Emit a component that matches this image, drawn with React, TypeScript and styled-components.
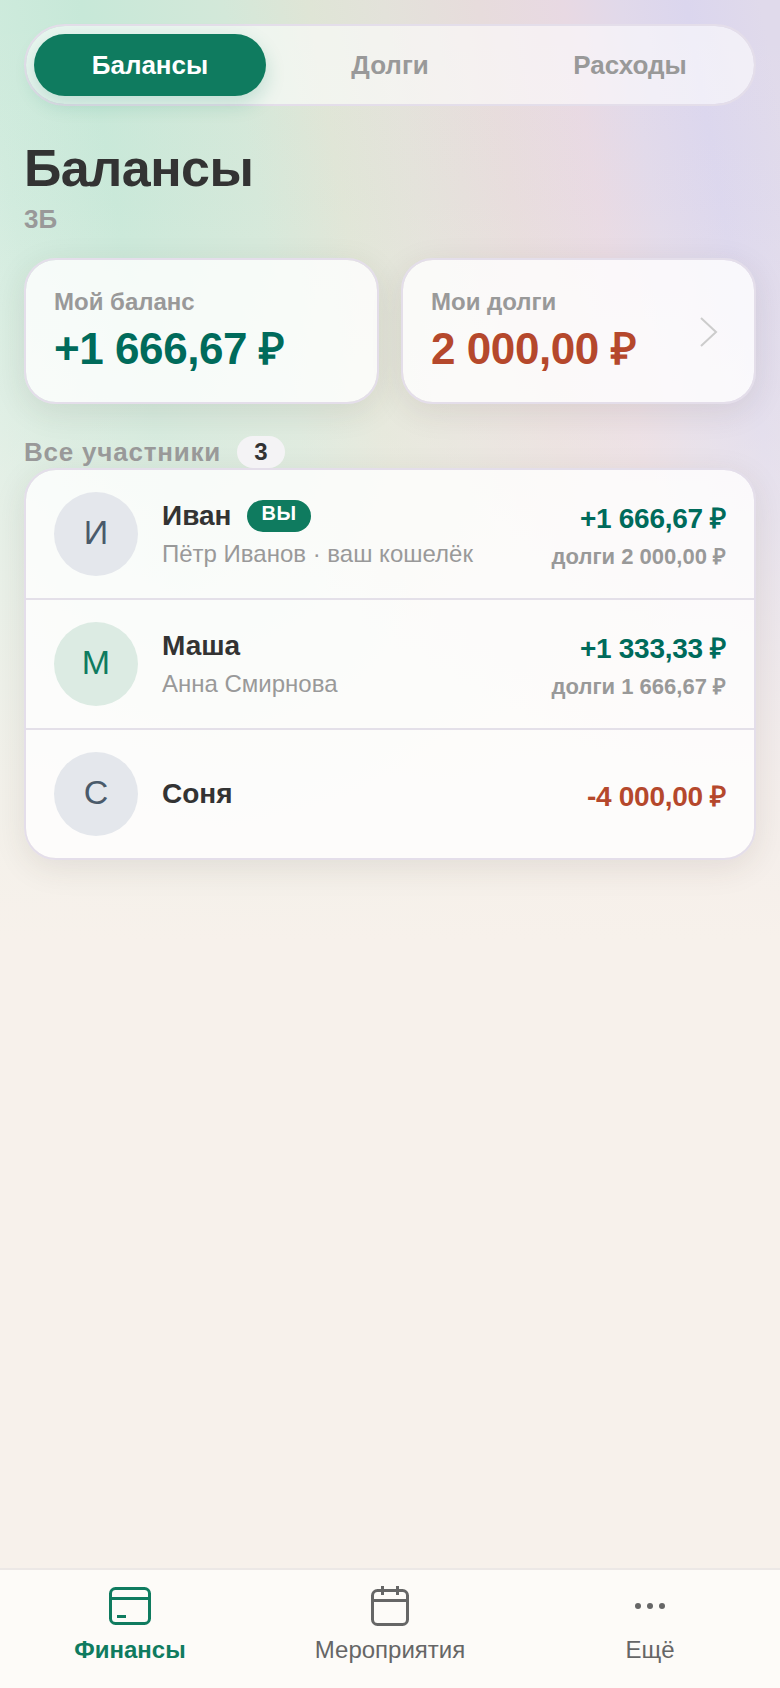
import React, { useState } from 'react';
import styled, { createGlobalStyle } from 'styled-components';

const GlobalStyle = createGlobalStyle`
  *, *::before, *::after { box-sizing: border-box; }
  body {
    margin: 0;
    background: #f7f1eb;
    color: #333333;
    font-family: "Liberation Sans", Arial, sans-serif;
  }
  button { font: inherit; color: inherit; border: 0; background: none; padding: 0; cursor: pointer; }
  h1, h2, p, ul { margin: 0; padding: 0; }
  ul { list-style: none; }
`;

const Page = styled.div`
  min-height: 100vh;
  display: flex;
  flex-direction: column;
  background:
    linear-gradient(to bottom, rgba(247, 241, 235, 0) 0, rgba(247, 241, 235, 0.06) 200px, rgba(247, 241, 235, 0.35) 440px, rgba(247, 241, 235, 0.85) 780px, #f7f1eb 940px) no-repeat,
    linear-gradient(80deg, #d8efe4 8%, #cfebdd 15%, #c7e8d8 26%, #d3e8d9 41%, #dfe5d6 50%, #e3e2da 58%, #e7dcdc 68%, #e8d9e3 77%, #e1d9ea 83%, #dbd6ee 90%, #e0daeb 98%) top / 100% 940px no-repeat;
`;

const Content = styled.main`
  flex: 1;
  padding: 24px;
`;

const Tabs = styled.div`
  display: grid;
  grid-template-columns: repeat(3, 1fr);
  gap: 8px;
  padding: 8px;
  border: 2px solid #e4deea;
  border-radius: 41px;
  background: rgba(255, 255, 255, 0.58);
  background-clip: padding-box;
`;

const Tab = styled.button<{ $active: boolean }>`
  height: 62px;
  border-radius: 31px;
  font-size: 26px;
  font-weight: 700;
  color: ${(p) => (p.$active ? '#ffffff' : '#999999')};
  background: ${(p) => (p.$active ? '#0f7b5f' : 'transparent')};
  box-shadow: ${(p) => (p.$active ? '0 8px 20px rgba(15, 123, 95, 0.2)' : 'none')};
`;

const Title = styled.h1`
  margin-top: 32px;
  font-size: 52px;
  line-height: 60px;
  letter-spacing: -0.01em;
`;

const Subtitle = styled.p`
  margin-top: 4px;
  font-size: 26px;
  line-height: 34px;
  font-weight: 700;
  color: #999999;
`;

const Summary = styled.div`
  display: grid;
  grid-template-columns: 1fr 1fr;
  gap: 22px;
  margin-top: 22px;
`;

const SummaryCard = styled.div`
  display: flex;
  align-items: center;
  justify-content: space-between;
  padding: 28px 28px 26px;
  border: 2px solid #e4deea;
  border-radius: 32px;
  background: rgba(255, 255, 255, 0.8);
  background-clip: padding-box;
  box-shadow: 0 8px 32px rgba(60, 50, 40, 0.1);
  text-align: left;
`;

const SummaryLabel = styled.span`
  display: block;
  font-size: 24px;
  line-height: 28px;
  font-weight: 700;
  color: #999999;
`;

const SummaryValue = styled.span<{ $negative?: boolean }>`
  display: block;
  margin-top: 6px;
  font-size: 44px;
  line-height: 54px;
  font-weight: 700;
  letter-spacing: -0.01em;
  white-space: nowrap;
  color: ${(p) => (p.$negative ? '#b5482c' : '#006b5b')};
`;

const SectionHead = styled.div`
  display: flex;
  gap: 16px;
  margin-top: 32px;
`;

const SectionTitle = styled.h2`
  font-size: 26px;
  line-height: 32px;
  letter-spacing: 0.03em;
  color: #999999;
`;

const Count = styled.span`
  width: 48px;
  border-radius: 16px;
  font-size: 24px;
  line-height: 32px;
  font-weight: 700;
  text-align: center;
  background: #f4f3f5;
`;

const MemberList = styled.ul`
  border: 2px solid #e4deea;
  border-radius: 32px;
  background: rgba(255, 255, 255, 0.8);
  background-clip: padding-box;
  box-shadow: 0 8px 32px rgba(60, 50, 40, 0.1);
`;

const Member = styled.li`
  display: flex;
  align-items: center;
  gap: 24px;
  padding: 22px 28px;
  & + & { border-top: 2px solid #e4e0e9; }
`;

const Avatar = styled.span<{ $green?: boolean }>`
  display: flex;
  align-items: center;
  justify-content: center;
  flex: none;
  width: 84px;
  height: 84px;
  padding-bottom: 4px;
  border-radius: 50%;
  font-size: 34px;
  color: ${(p) => (p.$green ? '#0f7b5f' : '#4a5a6a')};
  background: ${(p) => (p.$green ? '#dcebe3' : '#e4e7ec')};
`;

const Info = styled.div`
  flex: 1;
  min-width: 0;
  display: flex;
  flex-direction: column;
  gap: 4px;
`;

const NameLine = styled.div`
  display: flex;
  align-items: center;
  gap: 16px;
  font-size: 28px;
  line-height: 36px;
  font-weight: 700;
`;

const YouBadge = styled.span`
  height: 32px;
  padding: 0 14px;
  border-radius: 16px;
  font-size: 20px;
  line-height: 26px;
  letter-spacing: 0.03em;
  color: #ffffff;
  background: #0f7b5f;
`;

const Details = styled.div`
  font-size: 24px;
  line-height: 32px;
  color: #999999;
`;

const Amounts = styled.div`
  display: flex;
  flex-direction: column;
  gap: 4px;
  padding-top: 6px;
  text-align: right;
  font-weight: 700;
  white-space: nowrap;
`;

const Balance = styled.div<{ $negative?: boolean }>`
  font-size: 28px;
  line-height: 36px;
  letter-spacing: -0.01em;
  color: ${(p) => (p.$negative ? '#b5482c' : '#006b5b')};
`;

const Debt = styled.div`
  font-size: 22px;
  line-height: 32px;
  color: #999999;
`;

const BottomNav = styled.nav`
  position: sticky;
  bottom: 0;
  display: grid;
  grid-template-columns: repeat(3, 1fr);
  border-top: 2px solid #ece8e6;
  background: #fdfbf8;
`;

const NavItem = styled.button<{ $active?: boolean }>`
  display: flex;
  flex-direction: column;
  align-items: center;
  gap: 4px;
  padding: 12px 0 22px;
  font-size: 24px;
  line-height: 32px;
  font-weight: ${(p) => (p.$active ? 700 : 400)};
  color: ${(p) => (p.$active ? '#0f7b5f' : '#666666')};
`;

const Icon = styled.svg`
  display: block;
  fill: none;
  stroke: currentColor;
  stroke-width: 3;
`;

const Chevron = styled.svg`
  flex: none;
  margin-right: 8px;
  fill: none;
  stroke: #cccccc;
  stroke-width: 2;
`;

const members = [
  { initial: 'И', name: 'Иван', you: true, details: 'Пётр Иванов · ваш кошелёк', balance: '+1 666,67 ₽', debt: 'долги 2 000,00 ₽' },
  { initial: 'М', name: 'Маша', green: true, details: 'Анна Смирнова', balance: '+1 333,33 ₽', debt: 'долги 1 666,67 ₽' },
  { initial: 'С', name: 'Соня', balance: '-4 000,00 ₽', negative: true },
];

const tabs = ['Балансы', 'Долги', 'Расходы'];

export default function App() {
  const [tab, setTab] = useState(tabs[0]);
  return (
    <>
      <GlobalStyle />
      <Page>
        <Content>
          <Tabs role="tablist">
            {tabs.map((name) => (
              <Tab key={name} role="tab" aria-selected={tab === name} $active={tab === name} onClick={() => setTab(name)}>
                {name}
              </Tab>
            ))}
          </Tabs>
          <Title>Балансы</Title>
          <Subtitle>3Б</Subtitle>
          <Summary>
            <SummaryCard>
              <span>
                <SummaryLabel>Мой баланс</SummaryLabel>
                <SummaryValue>+1 666,67 ₽</SummaryValue>
              </span>
            </SummaryCard>
            <SummaryCard as="button">
              <span>
                <SummaryLabel>Мои долги</SummaryLabel>
                <SummaryValue $negative>2 000,00 ₽</SummaryValue>
              </span>
              <Chevron width="18" height="30" viewBox="0 0 18 30" aria-hidden="true">
                <path d="M1 1l15 14L1 29" />
              </Chevron>
            </SummaryCard>
          </Summary>
          <SectionHead>
            <SectionTitle>Все участники</SectionTitle>
            <Count>3</Count>
          </SectionHead>
          <MemberList>
            {members.map((m) => (
              <Member key={m.name}>
                <Avatar $green={m.green} aria-hidden="true">{m.initial}</Avatar>
                <Info>
                  <NameLine>
                    {m.name}
                    {m.you && <YouBadge>ВЫ</YouBadge>}
                  </NameLine>
                  {m.details && <Details>{m.details}</Details>}
                </Info>
                <Amounts>
                  <Balance $negative={m.negative}>{m.balance}</Balance>
                  {m.debt && <Debt>{m.debt}</Debt>}
                </Amounts>
              </Member>
            ))}
          </MemberList>
        </Content>
        <BottomNav>
          <NavItem $active aria-current="page">
            <Icon width="48" height="48" viewBox="0 0 48 48" aria-hidden="true">
              <rect x="4.5" y="6.5" width="39" height="35" rx="5" />
              <path d="M4.5 16.5h39M11 34.5h9" />
            </Icon>
            Финансы
          </NavItem>
          <NavItem>
            <Icon width="48" height="48" viewBox="0 0 48 48" aria-hidden="true">
              <rect x="6.5" y="8.5" width="35" height="34" rx="5" />
              <path d="M6.5 18.5h35M16.5 4v9M31.5 4v9" />
            </Icon>
            Мероприятия
          </NavItem>
          <NavItem>
            <Icon width="48" height="48" viewBox="0 0 48 48" aria-hidden="true">
              <g fill="currentColor" stroke="none">
                <circle cx="12" cy="24" r="3" />
                <circle cx="24" cy="24" r="3" />
                <circle cx="36" cy="24" r="3" />
              </g>
            </Icon>
            Ещё
          </NavItem>
        </BottomNav>
      </Page>
    </>
  );
}
